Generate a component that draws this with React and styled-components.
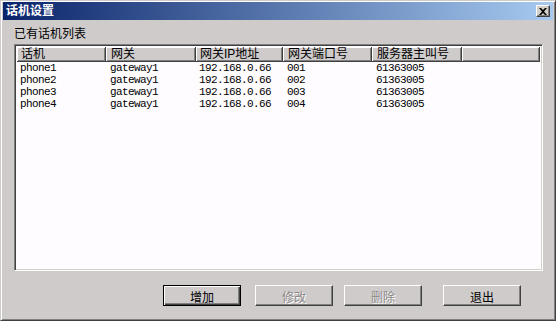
import React from 'react';
import styled, { createGlobalStyle } from 'styled-components';

const GlobalStyle = createGlobalStyle`
    html, body {
        margin: 0;
        padding: 0;
        background: #cfcbcb;
    }
`;

const cjk = `"Liberation Sans", "Noto Sans CJK SC", sans-serif`;

const Window = styled.div`
    width: 556px;
    height: 321px;
    box-sizing: border-box;
    background: #cfcbcb;
    border: 1px solid;
    border-color: #cfcbcb #404040 #404040 #cfcbcb;
    box-shadow: inset 1px 1px #ffffff, inset -1px -1px #808080;
    padding: 1px 2px 2px 2px;
    display: flex;
    flex-direction: column;
    font-family: ${cjk};
    font-size: 12px;
    color: #000;
`;

const TitleBar = styled.div`
    height: 18px;
    display: flex;
    align-items: center;
    justify-content: space-between;
    padding: 0 3px 0 3px;
    background: linear-gradient(to right, #0a246a, #a6caf0);
`;

const Title = styled.span`
    color: #fff;
    font-weight: bold;
    font-size: 12px;
    line-height: 18px;
`;

const CloseButton = styled.div`
    width: 14px;
    height: 12px;
    box-sizing: border-box;
    background: #d4d0c8;
    border: 1px solid;
    border-color: #ffffff #404040 #404040 #ffffff;
    box-shadow: inset -1px -1px #808080;
    display: flex;
    align-items: center;
    justify-content: center;
`;

const Content = styled.div`
    flex: 1;
    display: flex;
    flex-direction: column;
    padding: 7px 10px 0 11px;
`;

const Label = styled.div`
    line-height: 14px;
    height: 14px;
    margin-bottom: 3px;
`;

const ListView = styled.div`
    width: 529px;
    height: 227px;
    box-sizing: border-box;
    background: #fffcff;
    border: 1px solid;
    border-color: #808080 #ffffff #ffffff #808080;
    box-shadow: inset 1px 1px #404040, inset -1px -1px #d4d0c8;
    padding: 2px;
    overflow: hidden;
`;

const HeaderRow = styled.div`
    display: flex;
    height: 15px;
`;

const HeaderCell = styled.div`
    box-sizing: border-box;
    width: ${({ $w }) => ($w ? `${$w}px` : 'auto')};
    flex: ${({ $w }) => ($w ? 'none' : '1')};
    height: 15px;
    background: #cfcbcb;
    border-right: 1px solid #404040;
    border-bottom: 1px solid #404040;
    box-shadow: inset 1px 1px #ffffff, inset -1px -1px #808080;
    padding-left: ${({ $pl }) => $pl}px;
    line-height: 14px;
    white-space: nowrap;
`;

const Row = styled.div`
    display: flex;
    height: 12px;
    &:first-of-type {
        margin-top: 1px;
    }
`;

const Cell = styled.div`
    box-sizing: border-box;
    width: ${({ $w }) => $w}px;
    padding-left: ${({ $pl }) => $pl}px;
    font-family: "Liberation Mono", monospace;
    font-size: 11px;
    letter-spacing: -0.6px;
    line-height: 12px;
    white-space: nowrap;
`;

const ButtonBar = styled.div`
    display: flex;
    margin-top: 14px;
    padding-left: 149px;
`;

const Button = styled.div`
    width: 78px;
    height: 21px;
    box-sizing: border-box;
    margin-left: ${({ $ml }) => $ml}px;
    background: #cfcbcb;
    border: 1px solid;
    border-color: ${({ $default }) =>
        $default ? '#000 #000 #000 #000' : '#ffffff #404040 #404040 #ffffff'};
    box-shadow: ${({ $default }) =>
        $default
            ? 'inset 1px 1px #ffffff, inset -1px -1px #404040, inset -2px -2px #808080'
            : 'inset -1px -1px #808080'};
    display: flex;
    align-items: center;
    justify-content: center;
    font-size: 12px;
    color: ${({ $disabled }) => ($disabled ? '#8a8888' : '#000')};
    text-shadow: ${({ $disabled }) => ($disabled ? '1px 1px #ffffff' : 'none')};
    padding-top: 1px;
`;

const columns = [
    { title: '话机', w: 89, pl: 4 },
    { title: '网关', w: 90, pl: 5 },
    { title: '网关IP地址', w: 87, pl: 4 },
    { title: '网关端口号', w: 89, pl: 5 },
    { title: '服务器主叫号', w: 90, pl: 5 },
];

const rows = [
    ['phone1', 'gateway1', '192.168.0.66', '001', '61363005'],
    ['phone2', 'gateway1', '192.168.0.66', '002', '61363005'],
    ['phone3', 'gateway1', '192.168.0.66', '003', '61363005'],
    ['phone4', 'gateway1', '192.168.0.66', '004', '61363005'],
];

const App = () => {
    return (
        <>
            <GlobalStyle />
            <Window>
                <TitleBar>
                    <Title>话机设置</Title>
                    <CloseButton>
                        <svg width="8" height="7" viewBox="0 0 8 7">
                            <path d="M0 0h2l2 2 2-2h2L5 3.5 8 7H6L4 5 2 7H0l3-3.5z" fill="#000" />
                        </svg>
                    </CloseButton>
                </TitleBar>
                <Content>
                    <Label>已有话机列表</Label>
                    <ListView>
                        <HeaderRow>
                            {columns.map((c) => (
                                <HeaderCell key={c.title} $w={c.w} $pl={c.pl}>
                                    {c.title}
                                </HeaderCell>
                            ))}
                            <HeaderCell $pl={0} />
                        </HeaderRow>
                        {rows.map((r) => (
                            <Row key={r[0]}>
                                {r.map((v, i) => (
                                    <Cell key={i} $w={columns[i].w} $pl={columns[i].pl - 1}>
                                        {v}
                                    </Cell>
                                ))}
                            </Row>
                        ))}
                    </ListView>
                    <ButtonBar>
                        <Button $default $ml={0}>增加</Button>
                        <Button $disabled $ml={14}>修改</Button>
                        <Button $disabled $ml={11}>删除</Button>
                        <Button $ml={21}>退出</Button>
                    </ButtonBar>
                </Content>
            </Window>
        </>
    );
};

export default App;
